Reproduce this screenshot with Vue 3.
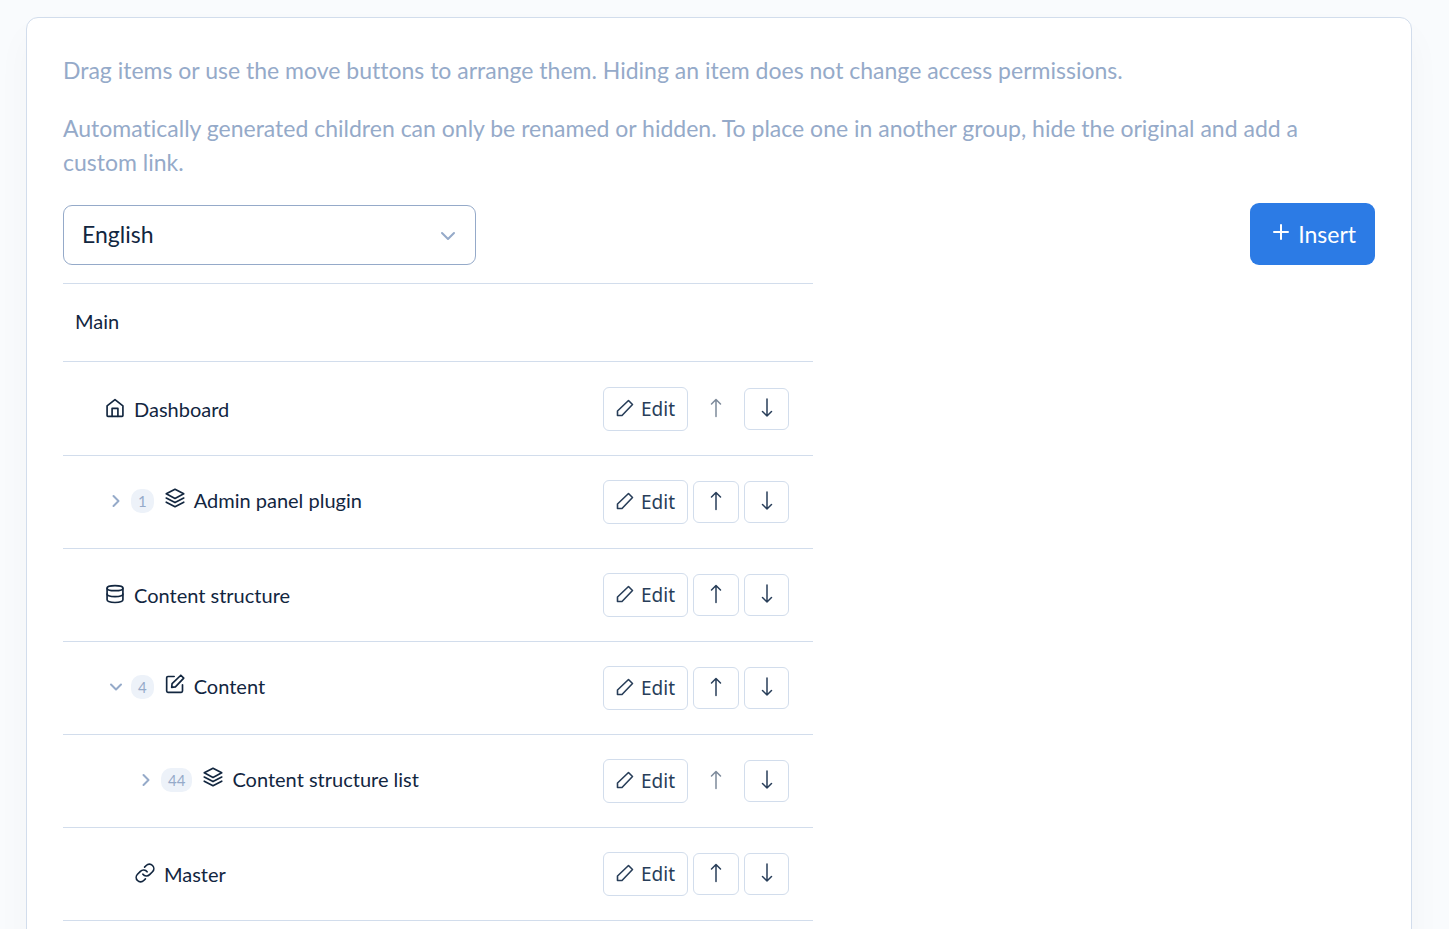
<script setup>
import { ref } from 'vue'

const language = ref('English')

const items = ref([
  { id: 1, name: 'Dashboard', icon: 'home', level: 0, first: true },
  { id: 2, name: 'Admin panel plugin', icon: 'layers', level: 0, count: 1, open: false },
  { id: 3, name: 'Content structure', icon: 'database', level: 0 },
  { id: 4, name: 'Content', icon: 'edit', level: 0, count: 4, open: true },
  { id: 5, name: 'Content structure list', icon: 'layers', level: 1, count: 44, open: false, first: true },
  { id: 6, name: 'Master', icon: 'link', level: 1 },
])

const icons = {
  home: ['M2.5 9.500 12 2l9.500 7.500V21a1 1 0 0 1-1 1h-17a1 1 0 0 1-1-1z', 'M8.5 22V12.5h7V22'],
  layers: ['M12 1.5 1.5 7 12 12.5 22.5 7z', 'M1.5 12 12 17.5 22.5 12', 'M1.5 17 12 22.5 22.5 17'],
  database: ['M2.500 5c0-4 19-4 19 0s-19 4-19 0z', 'M2.500 5v14c0 4.200 19 4.200 19 0V5', 'M2.500 12c0 4.200 19 4.200 19 0'],
  edit: ['M11 3H3.5A1.5 1.5 0 0 0 2 4.500V20.500A1.500 1.500 0 0 0 3.500 22H19.500A1.500 1.500 0 0 0 21 20.500V13', 'M19 1.500 22.500 5 12.500 15.500 8 16 8.500 11.500z'],
  link: ['M9.500 13.500a5.300 5.300 0 0 0 8 .500l3.500-3.500a5.300 5.300 0 0 0-7.500-7.500L11.500 5', 'M14.500 10.500a5.300 5.300 0 0 0-8-.500l-3.500 3.500a5.300 5.300 0 0 0 7.500 7.500l2-2'],
}
</script>

<template>
  <main class="page">
    <section class="card">
      <p class="help">Drag items or use the move buttons to arrange them. Hiding an item does not change access permissions.</p>
      <p class="help">Automatically generated children can only be renamed or hidden. To place one in another group, hide the original and add a custom link.</p>

      <div class="toolbar">
        <div class="select-wrap">
          <select v-model="language" class="select" aria-label="Language">
            <option>English</option>
          </select>
          <svg class="select-arrow" viewBox="0 0 16 10"><path d="M2 2l6 6 6-6" /></svg>
        </div>
        <button type="button" class="insert">
          <svg class="plus" viewBox="0 0 16 16"><path d="M8 1v14M1 8h14" /></svg>
          <span>Insert</span>
        </button>
      </div>

      <div class="tree">
        <div class="group">Main</div>
        <ul class="list">
          <li
            v-for="item in items"
            :key="item.id"
            class="row"
            :class="{ nested: item.level === 1 }"
          >
            <div class="item" :class="{ parent: item.count }">
              <template v-if="item.count">
                <button type="button" class="toggle" :aria-expanded="item.open" aria-label="Toggle children" @click="item.open = !item.open">
                  <svg class="chevron" viewBox="0 0 14 14">
                    <path :d="item.open ? 'M2 4.500l5 5 5-5' : 'M4.500 2l5 5-5 5'" />
                  </svg>
                </button>
                <span class="badge">{{ item.count }}</span>
              </template>
              <svg class="icon" viewBox="0 0 24 24">
                <path v-for="d in icons[item.icon]" :key="d" :d="d" />
              </svg>
              <span class="name">{{ item.name }}</span>
            </div>
            <div class="actions">
              <button type="button" class="btn btn-edit">
                <svg class="pencil" viewBox="0 0 18 18"><path d="M1.500 16.500v-4.500L12.500 1.500l4 4L6 16.500z" /></svg>
                <span>Edit</span>
              </button>
              <button type="button" class="btn btn-move btn-up" :disabled="item.first" aria-label="Move up">
                <svg class="arrow" viewBox="0 0 12 20"><path d="M6 18.500V1.500M1.500 6 6 1.500 10.500 6" /></svg>
              </button>
              <button type="button" class="btn btn-move" aria-label="Move down">
                <svg class="arrow" viewBox="0 0 12 20"><path d="M6 1v17M1.500 13.500 6 18 10.500 13.500" /></svg>
              </button>
            </div>
          </li>
        </ul>
      </div>
    </section>
  </main>
</template>

<style>
body {
  margin: 0;
  background: #f9fbfd;
}
</style>

<style scoped>
.page {
  padding: 17px 37px 36px 26px;
  color: #12263f;
  font-family: Lato, "Liberation Sans", sans-serif;
  font-size: 23px;
  font-variant-ligatures: none;
  line-height: 34px;
}

.card {
  padding: 35px 36px 36px;
  border: 1px solid #d2ddec;
  border-radius: 12px;
  background: #fff;
  box-shadow: 0 18px 36px rgba(18, 38, 63, 0.03);
}

.help {
  margin: 0 0 24px;
  color: #95aac9;
}

.toolbar {
  display: flex;
  align-items: flex-end;
  justify-content: space-between;
}

.select-wrap {
  position: relative;
  width: 413px;
}

.select {
  display: block;
  width: 100%;
  height: 60px;
  padding: 0 48px 3px 18px;
  border: 1px solid #95aac9;
  border-radius: 9px;
  background: #fff;
  color: #12263f;
  font: inherit;
  appearance: none;
}

.select-arrow {
  position: absolute;
  top: 26px;
  right: 20px;
  width: 16px;
  height: 10px;
  pointer-events: none;
}

svg {
  flex: none;
  fill: none;
  stroke: currentColor;
  stroke-width: 2;
  stroke-linecap: round;
  stroke-linejoin: round;
}

.select-arrow,
.chevron {
  color: #95aac9;
}

.insert {
  display: flex;
  align-items: center;
  justify-content: center;
  gap: 9px;
  height: 62px;
  padding: 0 19px 1px 23px;
  border: 0;
  border-radius: 9px;
  background: #2c7be5;
  color: #fff;
  font: inherit;
}

.plus {
  width: 16px;
  height: 16px;
  margin-bottom: 3px;
}

.tree {
  max-width: 750px;
  margin-top: 18px;
  border-top: 1px solid #d2ddec;
  font-size: 20px;
}

.group {
  padding: 20px 12px 23px;
  border-bottom: 1px solid #d2ddec;
}

.list {
  margin: 0;
  padding: 0;
  list-style: none;
}

.row {
  display: flex;
  align-items: center;
  justify-content: space-between;
  height: 92px;
  padding: 0 24px 0 42px;
  border-bottom: 1px solid #d2ddec;
}

.row:first-child {
  height: 93px;
}

.nested {
  padding-left: 72px;
}

.item {
  display: flex;
  align-items: center;
}

.parent {
  padding-bottom: 4px;
}

.toggle {
  display: flex;
  margin-top: 2px;
  padding: 4px;
  border: 0;
  background: none;
}

.chevron {
  width: 14px;
  height: 14px;
}

.badge {
  margin: 2px 11px 0 4px;
  padding: 0 7px;
  border-radius: 10px;
  background: #edf2f9;
  color: #95aac9;
  font-size: 15px;
  line-height: 24px;
}

.icon {
  width: 20px;
  height: 20px;
  margin: 0 9px 2px 0;
}

.parent .icon {
  margin-bottom: 5px;
}

.actions {
  display: flex;
  align-items: center;
  gap: 5px;
}

.btn {
  display: flex;
  align-items: center;
  justify-content: center;
  box-sizing: border-box;
  padding: 0;
  border: 1px solid #d2ddec;
  border-radius: 6px;
  background: #fff;
  color: #283e59;
}

.btn-edit {
  gap: 7px;
  width: 85px;
  height: 44px;
  font: 19px/28px "Noto Sans", sans-serif;
}

.pencil {
  width: 18px;
  height: 18px;
  margin-bottom: 2px;
  stroke-width: 1.6;
}

.btn-move {
  width: 45px;
  height: 42px;
}

.btn-up {
  width: 46px;
}

.btn-move:disabled {
  border-color: transparent;
  opacity: 0.6;
}

.arrow {
  width: 12px;
  height: 20px;
  margin-bottom: 2px;
  stroke-width: 1.5;
}
</style>
